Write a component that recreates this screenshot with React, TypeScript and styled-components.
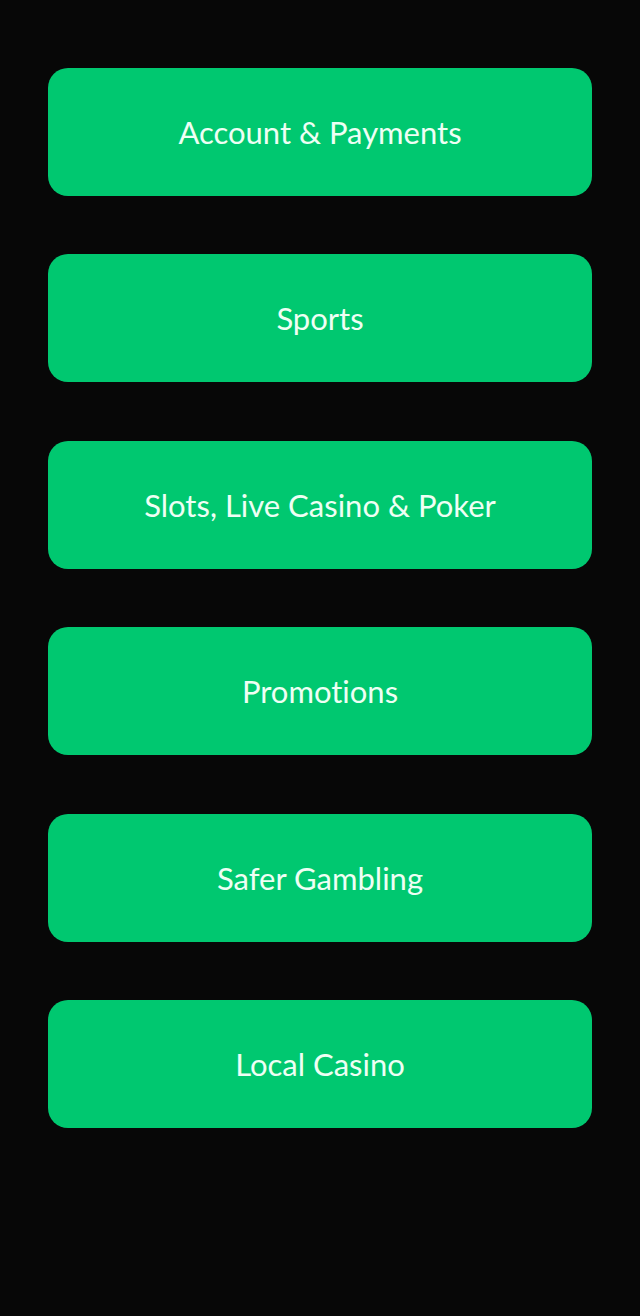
import styled, { createGlobalStyle } from 'styled-components';

const GlobalStyle = createGlobalStyle`
  html, body {
    margin: 0;
    padding: 0;
    background-color: #070707;
  }
  body {
    font-family: Lato, "Liberation Sans", sans-serif;
  }
`;

const Page = styled.div`
  min-height: 1316px;
  background-color: #070707;
  padding: 68px 48px 0;
  box-sizing: border-box;
`;

const MenuList = styled.nav`
  display: flex;
  flex-direction: column;
  gap: 58.4px;
`;

const MenuButton = styled.button`
  display: flex;
  align-items: center;
  justify-content: center;
  width: 100%;
  height: 128px;
  border: none;
  border-radius: 20px;
  background-color: #00c870;
  color: #eefff4;
  font-family: Lato, "Liberation Sans", sans-serif;
  font-size: 31px;
  font-weight: 400;
  font-variant-ligatures: none;
  cursor: pointer;
  padding: 0;
`;

const items = [
  'Account & Payments',
  'Sports',
  'Slots, Live Casino & Poker',
  'Promotions',
  'Safer Gambling',
  'Local Casino',
];

const App = () => {
  return (
    <>
      <GlobalStyle />
      <Page>
        <MenuList>
          {items.map((label) => (
            <MenuButton key={label}>{label}</MenuButton>
          ))}
        </MenuList>
      </Page>
    </>
  );
};

export default App;
